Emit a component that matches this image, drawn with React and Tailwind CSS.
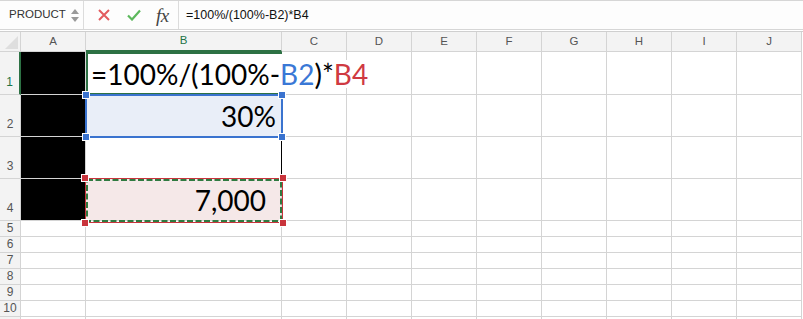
import React from 'react'

const COLS = ['A', 'B', 'C', 'D', 'E', 'F', 'G', 'H', 'I', 'J']
const ROWS = [1, 2, 3, 4, 5, 6, 7, 8, 9, 10, 11]

const cellBg = (col, row) => {
  if (col === 'A' && row <= 4) return 'bg-black'
  if (col === 'B' && row === 2) return 'bg-[#e9eef8]'
  if (col === 'B' && row === 4) return 'bg-[#f5e8e8]'
  return 'bg-white'
}

const Handle = ({ className }) => (
  <div className={`absolute w-[8px] h-[8px] border border-white ${className}`} />
)

const FormulaBar = () => (
  <div className="h-[30px] flex items-center bg-[#fdfdfd] border-t border-b border-[#d6d6d6]">
    <div className="w-[84px] h-full flex items-center justify-between pl-[9px] pr-[4px] border-r border-[#dcdcdc]">
      <span className="text-[11.5px] text-[#333]">PRODUCT</span>
      <div className="flex flex-col items-center gap-[3px]">
        <svg width="8" height="5" viewBox="0 0 8 5"><path d="M4 0L8 5H0z" fill="#9a9a9a" /></svg>
        <svg width="8" height="5" viewBox="0 0 8 5"><path d="M0 0H8L4 5z" fill="#9a9a9a" /></svg>
      </div>
    </div>
    <div className="w-[95px] h-full flex items-center border-r border-[#dcdcdc]">
      <svg className="ml-[14px]" width="12" height="12" viewBox="0 0 12 12">
        <path d="M1 1L11 11M11 1L1 11" stroke="#e35b5e" strokeWidth="2" />
      </svg>
      <svg className="ml-[17px]" width="14" height="12" viewBox="0 0 14 12">
        <path d="M1 6.5L5 10.5L13 1.5" stroke="#5cb85c" strokeWidth="2.2" fill="none" />
      </svg>
      <span className="ml-[15px] text-[19px] leading-none italic text-[#444] font-['Liberation_Serif',serif] tracking-[-0.5px]">fx</span>
    </div>
    <span className="ml-[7px] text-[12.5px] text-[#111]">=100%/(100%-B2)*B4</span>
  </div>
)

export default function App() {
  return (
    <div className="w-[803px] h-[319px] overflow-hidden bg-white font-['Liberation_Sans',Arial,sans-serif]">
      <FormulaBar />
      <div className="h-[2px] border-b border-[#cfcfcf] bg-white" />
      <div className="relative grid grid-cols-[21px_65px_196px_repeat(8,65px)] grid-rows-[20px_43px_42px_42px_42px_repeat(7,16px)]">
        {/* header row */}
        <div className="bg-[#f3f3f3] border-r border-b border-[#d4d4d4] relative overflow-hidden">
          <svg className="absolute right-[2px] bottom-[2px]" width="13" height="13" viewBox="0 0 13 13">
            <path d="M13 0V13H0z" fill="#dedede" />
          </svg>
        </div>
        {COLS.map((c) => (
          <div
            key={c}
            className={`flex items-center justify-center text-[11.5px] bg-[#f3f3f3] border-r border-[#d4d4d4] ${
              c === 'B' ? 'text-[#217346] border-b-2 border-b-[#2d7144]' : 'text-[#555] border-b'
            }`}
          >
            {c}
          </div>
        ))}
        {ROWS.map((r) => (
          <React.Fragment key={r}>
            <div
              className={`flex justify-center items-end text-[12px] leading-[14px] bg-[#f3f3f3] border-b border-[#d4d4d4] ${
                r <= 4 ? 'pb-[5px]' : 'pb-px'
              } ${r === 1 ? 'text-[#217346] border-r-2 border-r-[#2d7144]' : 'text-[#555] border-r'}`}
            >
              {r <= 10 ? r : ''}
            </div>
            {COLS.map((c) => {
              if (c === 'B' && r === 1) {
                return (
                  <div
                    key={c}
                    className="relative z-10 bg-white border-t-2 border-l-2 border-b-2 border-[#2d7144] flex items-center pl-[3px]"
                  >
                    <span className="whitespace-nowrap text-[28px] leading-none text-black font-['Lato',sans-serif] bg-white pr-[3px]">
                      =100%/(100%-<span className="text-[#3a78d6]">B2</span>)*<span className="text-[#cf3a42]">B4</span>
                    </span>
                    <div className="w-px h-[38px] bg-black" />
                  </div>
                )
              }
              if (c === 'B' && r === 2) {
                return (
                  <div key={c} className={`flex items-center justify-end pr-[5px] border-r border-b border-[#d4d4d4] ${cellBg(c, r)}`}>
                    <span className="text-[28px] leading-none font-['Lato',sans-serif] text-black">30%</span>
                  </div>
                )
              }
              if (c === 'B' && r === 3) {
                return <div key={c} className="bg-white border-r border-r-black border-b border-b-[#d4d4d4]" />
              }
              if (c === 'B' && r === 4) {
                return (
                  <div key={c} className={`flex items-center justify-end pr-[15px] border-r border-b border-[#d4d4d4] ${cellBg(c, r)}`}>
                    <span className="text-[28px] leading-none font-['Lato',sans-serif] text-black">7,000</span>
                  </div>
                )
              }
              return <div key={c} className={`border-r border-b border-[#d4d4d4] ${cellBg(c, r)}`} />
            })}
          </React.Fragment>
        ))}

        {/* B2 reference highlight */}
        <div className="absolute left-[85px] top-[62px] w-[198px] h-[44px] border-2 border-[#3a73cf] pointer-events-none z-20">
          <Handle className="-left-[5px] -top-[5px] bg-[#3a73cf]" />
          <Handle className="-right-[5px] -top-[5px] bg-[#3a73cf]" />
          <Handle className="-left-[5px] -bottom-[5px] bg-[#3a73cf]" />
          <Handle className="-right-[5px] -bottom-[5px] bg-[#3a73cf]" />
        </div>

        {/* B4 reference highlight with marching ants */}
        <div className="absolute left-[85px] top-[146px] w-[198px] h-[45px] border border-[#c9343c] pointer-events-none z-20">
          <svg className="absolute inset-0" width="196" height="43" viewBox="0 0 196 43">
            <rect x="1" y="1" width="194" height="41" fill="none" stroke="#2f7a40" strokeWidth="2" strokeDasharray="6 2.5" />
          </svg>
          <Handle className="-left-[5px] -top-[5px] bg-[#c9343c]" />
          <Handle className="-right-[5px] -top-[5px] bg-[#c9343c]" />
          <Handle className="-left-[5px] -bottom-[5px] bg-[#c9343c]" />
          <Handle className="-right-[5px] -bottom-[5px] bg-[#c9343c]" />
        </div>
      </div>
    </div>
  )
}
